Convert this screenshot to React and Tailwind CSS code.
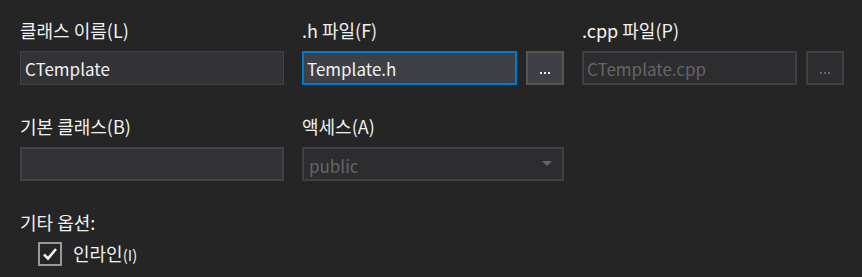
import React, { useState } from 'react'

const font = { fontFamily: '"Noto Sans CJK KR", "Noto Sans", sans-serif' }

const Label = ({ children, second }) => (
  <div className={`h-[25px] mb-[8px] text-[18px] leading-[25px] text-[#f1f1f1] ${second ? 'mt-[29px]' : 'mt-[18px]'}`}>{children}</div>
)

const Browse = ({ disabled }) => (
  <button
    className={`w-[38px] h-[34px] border-2 flex items-end justify-center pb-[9px] gap-[2px] ${disabled ? 'border-[#3f3f46] bg-[#2d2d30]' : 'border-[#555555] bg-[#3f3f46]'}`}
  >
    {[0, 1, 2].map((i) => (
      <span key={i} className={`block w-[2px] h-[2px] ${disabled ? 'bg-[#656565]' : 'bg-[#f1f1f1]'}`}></span>
    ))}
  </button>
)

const App = () => {
  const [inline, setInline] = useState(true)

  return (
    <div className="w-[862px] h-[277px] bg-[#252526] pl-[20px] overflow-hidden" style={font}>
      <div className="grid grid-cols-[264px_262px_262px] gap-x-[18px]">
        <div>
          <Label>클래스 이름(L)</Label>
          <div className="h-[34px] border border-[#434346] bg-[#333337] pl-[4px] text-[17px] leading-[34px] text-[#f1f1f1]">CTemplate</div>
        </div>
        <div>
          <Label>.h 파일(F)</Label>
          <div className="flex gap-[9px]">
            <div className="w-[215px] h-[34px] border-2 border-[#007acc] bg-[#3f3f46] pl-[3px] text-[17px] leading-[32px] text-[#f1f1f1]">Template.h</div>
            <Browse />
          </div>
        </div>
        <div>
          <Label>.cpp 파일(P)</Label>
          <div className="flex gap-[9px]">
            <div className="w-[215px] h-[34px] border-2 border-[#3f3f46] bg-[#2d2d30] pl-[3px] text-[17px] leading-[32px] text-[#656565]">CTemplate.cpp</div>
            <Browse disabled />
          </div>
        </div>

        <div>
          <Label second>기본 클래스(B)</Label>
          <div className="h-[34px] border-2 border-[#434346] bg-[#333337]"></div>
        </div>
        <div>
          <Label second>액세스(A)</Label>
          <div className="h-[34px] border-2 border-[#3f3f46] bg-[#2d2d30] pl-[5px] pr-[10px] flex items-center justify-between text-[17px] text-[#656565]">
            <span className="leading-[30px] pt-[3px]">public</span>
            <svg width="10" height="6" viewBox="0 0 10 6"><path d="M0 0h10L5 5z" fill="#656565" /></svg>
          </div>
        </div>
        <div></div>
      </div>

      <div className="mt-[29px] text-[18px] leading-[25px] text-[#f1f1f1]">기타 옵션:</div>
      <label className="mt-[6px] ml-[18px] flex items-center gap-[11px] cursor-pointer" onClick={() => setInline(!inline)}>
        <span className="w-[24px] h-[24px] border-2 border-[#999999] flex items-center justify-center">
          {inline && (
            <svg width="16" height="14" viewBox="0 0 16 14">
              <path d="M2 7.5l4 4L14 2" stroke="#f1f1f1" strokeWidth="2.6" fill="none" />
            </svg>
          )}
        </span>
        <span className="text-[18px] leading-[25px] text-[#f1f1f1]">인라인<span className="text-[15px]">(I)</span></span>
      </label>
    </div>
  )
}

export default App
